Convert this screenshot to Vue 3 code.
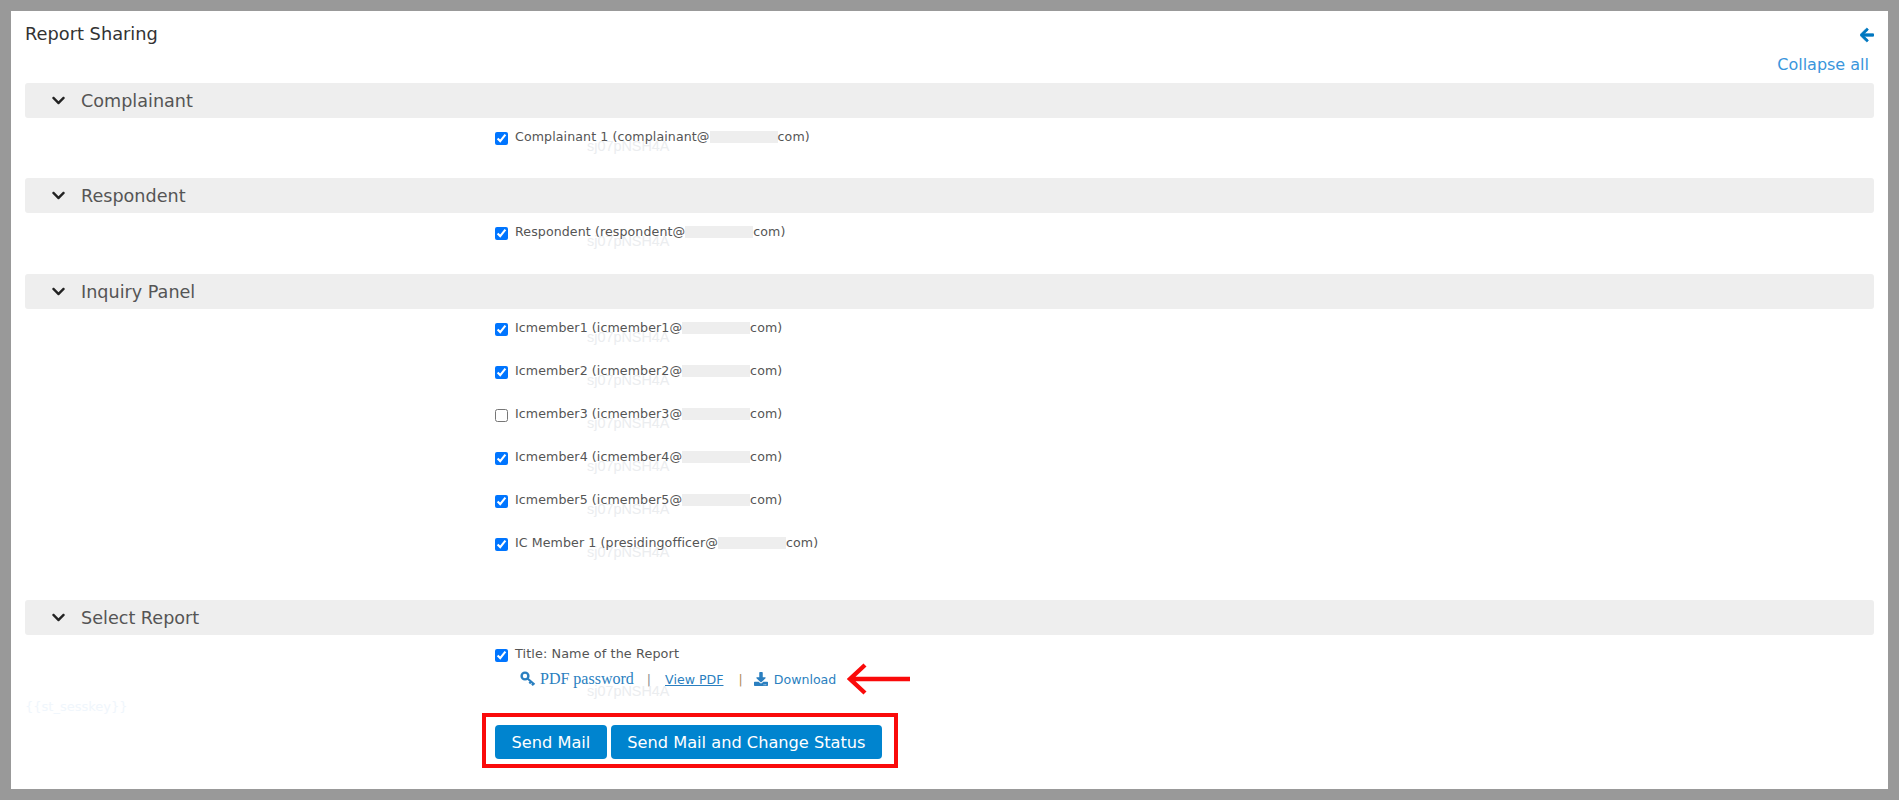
<script setup>
const sections = [
  { title: 'Complainant', cls: 'sec-a', rows: [
    { name: 'Complainant 1 (complainant@', checked: true },
  ] },
  { title: 'Respondent', cls: 'sec-b', rows: [
    { name: 'Respondent (respondent@', checked: true },
  ] },
  { title: 'Inquiry Panel', cls: 'sec-c', rows: [
    { name: 'Icmember1 (icmember1@', checked: true },
    { name: 'Icmember2 (icmember2@', checked: true },
    { name: 'Icmember3 (icmember3@', checked: false },
    { name: 'Icmember4 (icmember4@', checked: true },
    { name: 'Icmember5 (icmember5@', checked: true },
    { name: 'IC Member 1 (presidingofficer@', checked: true },
  ] },
]
const chevron = 'M207.029 381.476L12.686 187.132c-9.373-9.373-9.373-24.569 0-33.941l22.667-22.667c9.357-9.357 24.522-9.375 33.901-.04L224 284.505l154.745-154.021c9.379-9.335 24.544-9.317 33.901.04l22.667 22.667c9.373 9.373 9.373 24.569 0 33.941L240.971 381.476c-9.373 9.372-24.569 9.372-33.942 0z'
</script>

<template>
  <div class="frame">
    <main class="panel">
      <div class="top">
        <h1 class="title">Report Sharing</h1>
        <svg class="back" viewBox="0 0 448 512"><path d="M257.5 445.1l-22.2 22.2c-9.4 9.4-24.6 9.4-33.9 0L7 273c-9.4-9.4-9.4-24.6 0-33.9L201.4 44.7c9.4-9.4 24.6-9.4 33.9 0l22.2 22.2c9.5 9.5 9.3 25-.4 34.3L136.6 216H424c13.3 0 24 10.7 24 24v32c0 13.3-10.7 24-24 24H136.6l120.5 114.8c9.8 9.3 10 24.8.4 34.3z"/></svg>
      </div>
      <div class="collapse-row"><a class="collapse">Collapse all</a></div>

      <section v-for="s in sections" :key="s.title" :class="s.cls">
        <header class="bar">
          <svg class="chev" viewBox="0 0 448 512"><path :d="chevron"/></svg>
          <span>{{ s.title }}</span>
        </header>
        <div class="body">
          <label v-for="r in s.rows" :key="r.name" class="row">
            <input type="checkbox" :checked="r.checked" />
            <span class="mark">sj07pNSH4A</span>
            <span class="name">{{ r.name }}<i class="redact"></i>com)</span>
          </label>
        </div>
      </section>

      <section>
        <header class="bar">
          <svg class="chev" viewBox="0 0 448 512"><path :d="chevron"/></svg>
          <span>Select Report</span>
        </header>
        <div class="report">
          <span class="sess">&#123;&#123;st_sesskey&#125;&#125;</span>
          <div class="report-main">
            <label class="report-title">
              <input type="checkbox" checked />
              <span class="name title-name">Title: Name of the Report</span>
            </label>
            <div class="links">
              <svg class="key" viewBox="0 0 16 16">
                <circle cx="5" cy="5" r="3.4" fill="none" stroke="#2a7fc0" stroke-width="2.4"/>
                <path d="M7.5 7.5L14.5 13.5M11 10.6L9.4 12.4M13.4 12.6L12 14.2" fill="none" stroke="#2a7fc0" stroke-width="2.2"/>
              </svg>
              <a class="pdfpass">PDF password</a>
              <span class="sep">|</span>
              <a class="view">View PDF</a>
              <span class="sep sep-b">|</span>
              <svg class="dl" viewBox="0 0 512 512"><path d="M216 0h80c13.3 0 24 10.7 24 24v168h87.7c17.8 0 26.7 21.5 14.1 34.1L269.7 378.3c-7.5 7.5-19.8 7.5-27.3 0L90.1 226.1c-12.6-12.6-3.7-34.1 14.1-34.1H192V24c0-13.3 10.7-24 24-24zm296 376v112c0 13.3-10.7 24-24 24H24c-13.3 0-24-10.7-24-24V376c0-13.3 10.7-24 24-24h146.7l49 49c20.1 20.1 52.5 20.1 72.6 0l49-49H488c13.3 0 24 10.7 24 24zm-124 88c0-11-9-20-20-20s-20 9-20 20 9 20 20 20 20-9 20-20zm64 0c0-11-9-20-20-20s-20 9-20 20 9 20 20 20 20-9 20-20z"/></svg>
              <a class="download">Download</a>
              <span class="mark mark-r">sj07pNSH4A</span>
              <svg class="red-arrow" viewBox="0 0 64 34">
                <path d="M63 17H3M18 3L3 17L18 31" fill="none" stroke="#fa0a0a" stroke-width="4.4"/>
              </svg>
            </div>
            <div class="actions">
              <button class="btn">Send Mail</button>
              <button class="btn">Send Mail and Change Status</button>
              <span class="red-box"></span>
            </div>
          </div>
        </div>
      </section>
    </main>
  </div>
</template>

<style>
html, body { margin: 0; background: #999; }
</style>

<style scoped>
.frame {
  box-sizing: border-box;
  width: 1899px;
  height: 800px;
  padding: 11px;
  background: #999;
  font-family: "DejaVu Sans", Verdana, sans-serif;
}
.panel {
  box-sizing: border-box;
  height: 778px;
  padding: 0 14px;
  background: #fff;
}
.top {
  display: flex;
  justify-content: space-between;
  height: 40px;
  padding-top: 12px;
  box-sizing: border-box;
}
.title { margin: 0; font-size: 17.8px; line-height: 21px; font-weight: 400; color: #333; }
.back { width: 14px; height: 16px; margin-top: 4px; fill: #0078c0; stroke: #0078c0; stroke-width: 24; }
.collapse-row { display: flex; justify-content: flex-end; height: 32px; padding-right: 5px; }
.collapse { font-size: 16px; line-height: 28px; color: #3a96dc; }
.bar {
  display: flex;
  align-items: center;
  height: 35px;
  padding-left: 27px;
  border-radius: 3px;
  background: #eee;
  font-size: 17.6px;
  color: #555;
}
.chev { width: 13px; height: 15px; margin-right: 16px; fill: #222; }
.body { padding: 13px 0 0 470px; }
.sec-a .body { padding-bottom: 4px; }
.sec-b .body { padding-bottom: 5px; }
.sec-c .body { padding-bottom: 20px; }
.row {
  position: relative;
  display: flex;
  align-items: flex-start;
  height: 43px;
}
input[type="checkbox"] { width: 13px; height: 13px; margin: 1px 7px 0 0; flex: none; }
.name {
  position: relative;
  top: -1px;
  font-size: 12.6px;
  line-height: 13px;
  color: #555;
  white-space: nowrap;
  letter-spacing: 0.1px;
}
.title-name { font-size: 12.8px; }
.redact { display: inline-block; width: 68px; height: 12px; background: #eee; vertical-align: -2px; }
.mark {
  position: absolute;
  left: 92px;
  top: 7px;
  font-family: "Liberation Sans", Arial, sans-serif;
  font-size: 14.4px;
  line-height: 16px;
  color: #ebedef;
  pointer-events: none;
}
.report { display: flex; padding-top: 13px; }
.sess {
  width: 470px;
  flex: none;
  padding-top: 50px;
  font-size: 13px;
  line-height: 17px;
  color: #f0f6fc;
}
.report-main { position: relative; }
.report-title { display: flex; height: 22px; }
.links {
  position: relative;
  display: flex;
  align-items: center;
  height: 18px;
  padding-left: 25px;
  font-size: 12.6px;
  color: #2a7fc0;
  white-space: nowrap;
}
.key { width: 16px; height: 16px; margin-right: 4px; }
.pdfpass { font-family: "Liberation Serif", serif; font-size: 16px; }
.sep { margin: 0 14px 0 13px; color: #8a8a8a; }
.sep-b { margin: 0 11px 0 15px; color: #b08a55; }
.view { text-decoration: underline; }
.dl { width: 14px; height: 14px; margin-right: 6px; fill: #2a7fc0; }
.mark-r { top: 13px; }
.red-arrow { position: absolute; left: 352px; top: -8px; width: 64px; height: 34px; }
.actions { position: relative; display: flex; gap: 4px; margin-top: 37px; }
.btn {
  height: 34px;
  padding: 0 16.5px;
  border: 0;
  border-radius: 4px;
  background: #0084cf;
  color: #fff;
  font-family: inherit;
  font-size: 16.2px;
}
.red-box {
  position: absolute;
  left: -13px;
  top: -12px;
  width: 416px;
  height: 55px;
  box-sizing: border-box;
  border: 4px solid #fa0a0a;
}
</style>
